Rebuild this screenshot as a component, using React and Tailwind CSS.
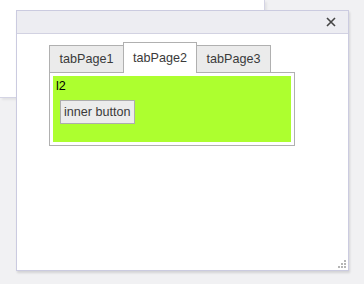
export default function App() {
  const tabs = ["tabPage1", "tabPage2", "tabPage3"];
  const active = 1;

  return (
    <div className="relative w-[364px] h-[284px] bg-[#f1f1f3] overflow-hidden font-['Liberation_Sans',Arial,sans-serif] text-[12.6px] text-[#3a3a3a]">
      {/* window behind */}
      <div className="absolute left-0 top-0 w-[265px] h-[98px] bg-white border-r border-b border-[#d4d4e4] shadow-[2px_2px_2px_rgba(0,0,0,0.06)]" />

      {/* dialog */}
      <div className="absolute left-[16px] top-[10px] w-[333px] h-[261px] flex flex-col bg-white border border-[#cbcbe0] shadow-[1px_2px_2px_rgba(0,0,0,0.12)]">
        <div className="h-[23px] shrink-0 flex items-center justify-end pr-[12px] bg-[#ededf2] border-b border-[#d2d2e2]">
          <svg width="10" height="10" viewBox="0 0 10 10" className="-mt-[1px]">
            <path d="M1 1 L9 9 M9 1 L1 9" stroke="#444" strokeWidth="1.6" />
          </svg>
        </div>

        <div className="relative flex-1 pl-[32px] pt-[8px]">
          <div className="flex items-end h-[31px]">
            {tabs.map((t, i) => (
              <div
                key={t}
                className={
                  i === active
                    ? "relative z-10 h-[31px] w-[74px] -ml-px first:ml-0 flex items-start justify-center pt-[6px] bg-white border border-b-0 border-[#b0b0b0]"
                    : "h-[28px] w-[75px] -ml-px first:ml-0 flex items-center justify-center pt-[1px] bg-[#ebebeb] border border-[#b0b0b0]"
                }
              >
                {t}
              </div>
            ))}
          </div>
          <div className="-mt-px w-[246px] h-[74px] p-[3px] border border-[#b0b0b0] bg-white">
            <div className="h-full bg-[#adff2f] pt-[3px] pl-[3px]">
              <div className="text-black leading-[15px]">l2</div>
              <div className="pl-[4px] pt-[6px]">
                <button className="h-[24px] px-[3px] bg-[#ececec] border border-[#adadad] text-[#3a3a3a] leading-none">
                  inner button
                </button>
              </div>
            </div>
          </div>

          {/* resize grip */}
          <svg width="8" height="8" viewBox="0 0 8 8" className="absolute right-[2px] bottom-[2px]">
            <rect x="6" y="0" width="2" height="2" fill="#b5b5b5" />
            <rect x="3" y="3" width="2" height="2" fill="#b5b5b5" />
            <rect x="6" y="3" width="2" height="2" fill="#b5b5b5" />
            <rect x="0" y="6" width="2" height="2" fill="#b5b5b5" />
            <rect x="3" y="6" width="2" height="2" fill="#b5b5b5" />
            <rect x="6" y="6" width="2" height="2" fill="#b5b5b5" />
          </svg>
        </div>
      </div>
    </div>
  );
}
